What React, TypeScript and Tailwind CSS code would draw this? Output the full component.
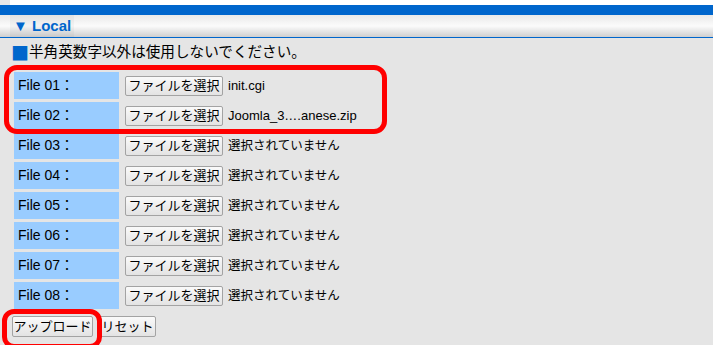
import React from "react";

const files = [
  { no: "01", name: "init.cgi" },
  { no: "02", name: "Joomla_3….anese.zip" },
  { no: "03", name: "" },
  { no: "04", name: "" },
  { no: "05", name: "" },
  { no: "06", name: "" },
  { no: "07", name: "" },
  { no: "08", name: "" },
];

const font = { fontFamily: '"Liberation Sans", "Noto Sans CJK JP", sans-serif' };

const Btn = ({ children, className }: { children: React.ReactNode; className?: string }) => (
  <button
    className={`h-[20px] border border-[#a3a3a3] rounded-[2px] bg-gradient-to-b from-[#fafafa] to-[#e3e3e3] text-[13px] text-black leading-none ${className ?? ""}`}
  >
    {children}
  </button>
);

const App = () => {
  return (
    <div className="relative w-[713px] h-[345px] overflow-hidden bg-[#e5e5e5]" style={font}>
      {/* top strip */}
      <div className="h-[5px] bg-white flex">
        <div className="w-[10px] bg-[#e8e8e8]" />
      </div>
      <div className="h-[10px] bg-[#0066cc]" />
      <div className="h-[22px] bg-gradient-to-b from-[#e9e9e9] via-[#fbfbfb] to-[#cfcfcf] flex items-center border-b border-[#0066cc] box-content">
        <div className="ml-[10px] px-[3px] h-full flex items-center text-[#0066cc] font-bold text-[15px] bg-black/[0.03]">
          ▼ Local
        </div>
      </div>

      <div className="pl-[12px] pt-[4px] h-[34px] text-[14.6px] text-black flex items-start leading-[20px]">
        <span className="text-[#0066cc] text-[18px] leading-[20px] font-['Noto_Sans_CJK_JP'] -ml-[1px]">■</span>
        半角英数字以外は使用しないでください。
      </div>

      <div className="pl-[14px]">
        {files.map((f) => (
          <div key={f.no} className="flex items-center h-[27px] mb-[3px]">
            <div className="w-[105px] h-full bg-[#99ccff] flex items-center pl-[4px] text-[14px] text-black">
              File {f.no}：
            </div>
            <Btn className="ml-[6px] w-[98px]">ファイルを選択</Btn>
            <span className="ml-[5px] text-[13px] text-black">
              {f.name || <span className="text-[12.5px]">選択されていません</span>}
            </span>
          </div>
        ))}
      </div>

      <div className="pl-[12px] pt-[4px] flex gap-[6px]">
        <Btn className="w-[81px] h-[21px]">アップロード</Btn>
        <Btn className="w-[57px] h-[21px]">リセット</Btn>
      </div>

      {/* annotation boxes */}
      <div className="absolute left-[4px] top-[65px] w-[383px] h-[69px] border-[5px] border-[#ff0000] rounded-[13px]" />
      <div className="absolute left-[2px] top-[309px] w-[100px] h-[40px] border-[5px] border-[#ff0000] rounded-[12px]" />
    </div>
  );
};

export default App;
